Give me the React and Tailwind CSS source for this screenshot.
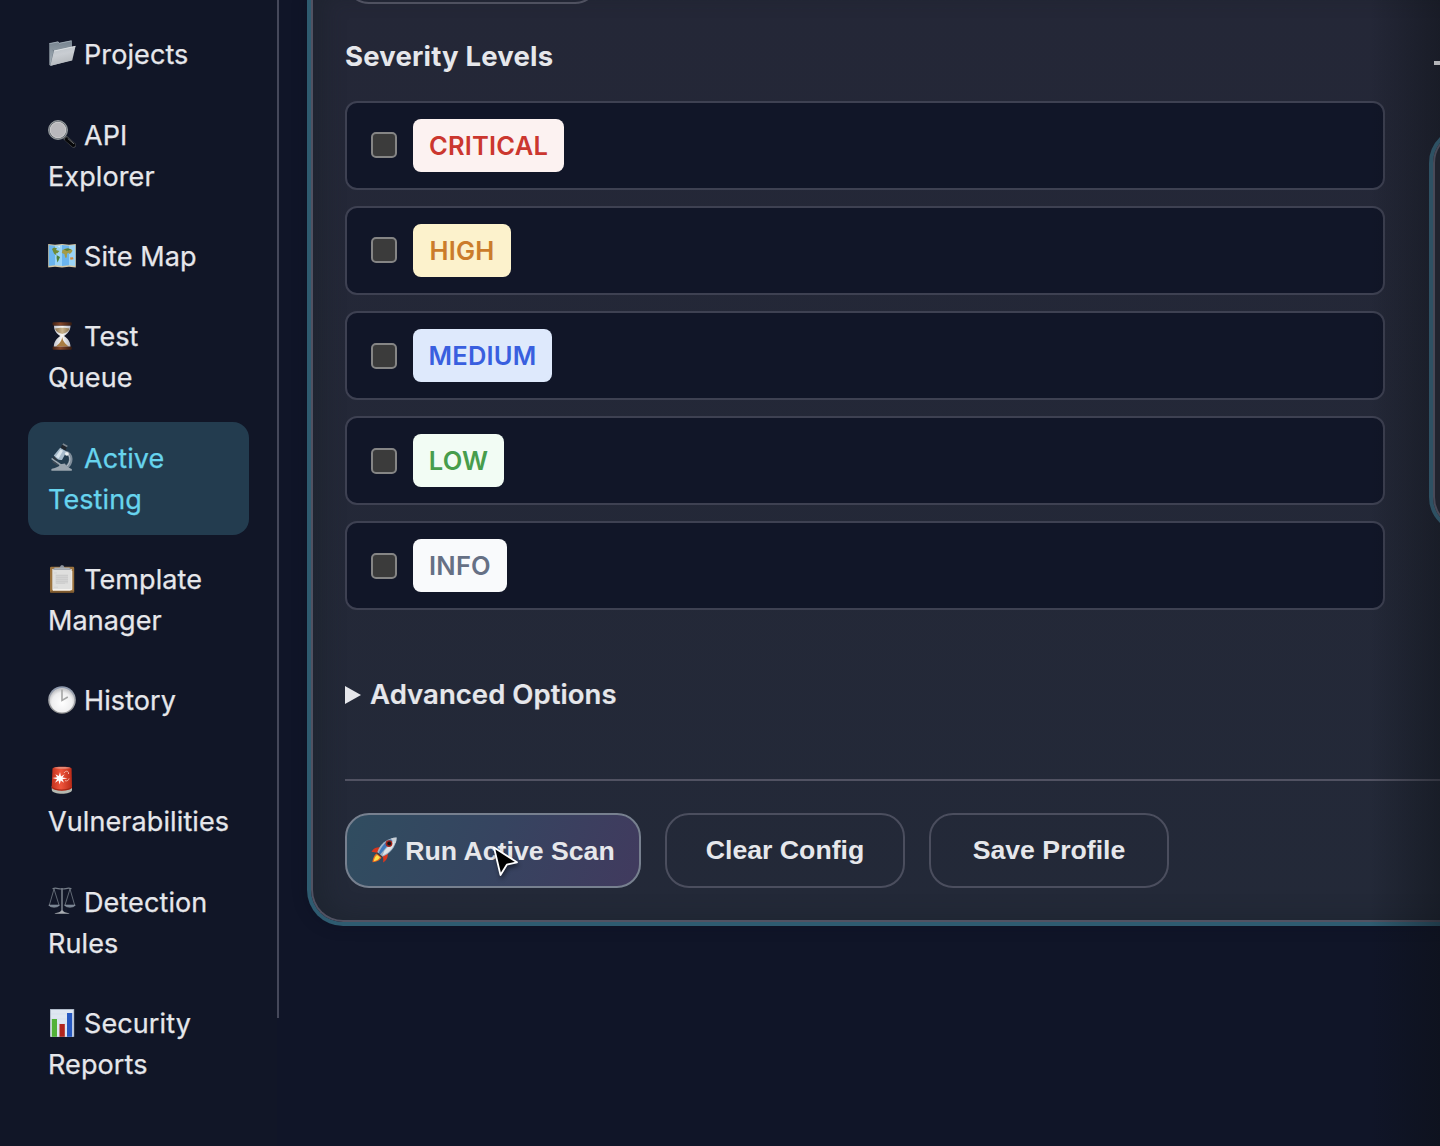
import React from "react";

const FolderIcon = () => (
  <>
    <defs>
      <linearGradient id="fo1" x1="0" y1="0" x2="0" y2="1"><stop offset="0" stopColor="#76838f" /><stop offset="1" stopColor="#a9b3bb" /></linearGradient>
      <linearGradient id="fo2" x1="0" y1="0" x2="0.3" y2="1"><stop offset="0" stopColor="#b9c1c8" /><stop offset="0.5" stopColor="#c9cdd2" /><stop offset="1" stopColor="#b4b8bc" /></linearGradient>
    </defs>
    <path d="M1.2 3.4 L10 1.6 L11.5 3 L23.3.6 L24 1.2 V20 L3 25.8 L1.4 25 Z" fill="url(#fo1)" />
    <path d="M1.3 3.6 L10 1.9 L11.4 3.2 L23.6.8" fill="none" stroke="#b3bfc8" strokeWidth=".7" />
    <path d="M4.6 10 L6 11 L2.6 25.2" fill="none" stroke="#66727d" strokeWidth=".8" />
    <path d="M6 10.8 L27.6 6 L24.2 20.4 L2.4 25.8 Z" fill="url(#fo2)" />
    <path d="M6 11 L27.4 6.3" stroke="#e3e7ea" strokeWidth=".8" />
  </>
);

const MagnifierIcon = () => (
  <>
    <path d="M16.5 17 L25.5 25.2" stroke="#4a4d52" strokeWidth="5" strokeLinecap="round" />
    <path d="M19 19.4 L25.4 25" stroke="#060709" strokeWidth="4" strokeLinecap="round" />
    <path d="M19.8 18.5 L26 23.9" stroke="#85888c" strokeWidth=".8" />
    <circle cx="10" cy="10" r="9" fill="#bdbdc0" stroke="#5e6368" strokeWidth="2" />
    <circle cx="10" cy="10" r="9.3" fill="none" stroke="#aab0b5" strokeWidth=".8" />
    <circle cx="10" cy="10" r="7.8" fill="#b9b8bc" stroke="#dadada" strokeWidth=".6" />
  </>
);

const MapIcon = () => (
  <>
    <path d="M.2 2 L7 2.7 L14 2 L21 2.7 L27.8 2 V25.5 L21 24.8 L14 25.5 L7 24.8 L.2 25.5 Z" fill="#d7c9a4" />
    <path d="M.8 3 L7 3.7 V23.2 L.8 24 Z M14 3 L21 3.7 V23.2 L14 24 Z" fill="#6bb5ed" />
    <path d="M7 3.7 L14 3 V24 L7 23.2 Z M21 3.7 L27.2 3 V24 L21 23.2 Z" fill="#9bd4f6" />
    <path d="M4 7 L6 5.6 L9 6.2 L8 8 L11.5 9 L9 11.5 L7.8 11 L8.5 13.5 L6 11.5Z" fill="#718c35" />
    <path d="M8.8 13.2 L12 15 L10.5 18.5 L9.4 20.5 L8.6 16Z" fill="#4d8138" />
    <path d="M14.5 8 L17.5 6.4 L23 7 L24.6 8.8 L23 11 L21.5 12 L20.5 10.8 L19 11.8 L18.8 15.5 L17.2 15.8 L16.4 12 L13.8 11Z" fill="#a59c48" />
    <path d="M15.8 7.4 L20 6.3 L23 7.5 L19 9Z" fill="#55803a" />
    <path d="M22 15.5 L25 15.2 L25.5 17.2 L22.5 17.7Z" fill="#d68a38" />
    <path d="M10 4.2 L12 3.8 L11.5 5.7Z" fill="#e6f3f5" />
  </>
);

const HourglassIcon = () => (
  <>
    <defs>
      <linearGradient id="hg" x1="0" x2="1"><stop offset="0" stopColor="#3f2013" /><stop offset=".4" stopColor="#85472a" /><stop offset="1" stopColor="#351b11" /></linearGradient>
      <linearGradient id="hg2" x1="0" x2="1"><stop offset="0" stopColor="#c4c6d0" /><stop offset=".5" stopColor="#faf8f3" /><stop offset="1" stopColor="#b8bbc8" /></linearGradient>
      <linearGradient id="hg3" x1="0" x2="1"><stop offset="0" stopColor="#8d7552" /><stop offset=".5" stopColor="#c9b48d" /><stop offset="1" stopColor="#8d7552" /></linearGradient>
    </defs>
    <path d="M6 3.5 H22.5 C22.5 9 19 12 16 14 C19 16 22.5 19 22.5 25 H5.8 C5.8 19 9.5 16 12.3 14 C9 12 6 9 6 3.5Z" fill="url(#hg2)" />
    <path d="M7 6.5 C11 5.4 18 5.4 21.6 6.5 C20.5 10 17.5 11 14.2 12 C11 11 8 10 7 6.5Z" fill="url(#hg3)" />
    <path d="M14.2 15 C15 21 19 22.5 20.5 24.5 H8 C9.5 22.5 13.4 21 14.2 15Z" fill="#a97d43" />
    <rect x="4.5" y=".3" width="19.3" height="3.2" rx="1" fill="url(#hg)" />
    <rect x="4.5" y="24.4" width="19.3" height="3.3" rx="1" fill="url(#hg)" />
  </>
);

const MicroscopeIcon = () => (
  <>
    <path d="M17 9.5 C24.5 10 24.8 21 17 25" fill="none" stroke="#7f8d9a" strokeWidth="3.6" />
    <path d="M20 11 C23.4 15 22 21 18 24" fill="none" stroke="#b9c5cf" strokeWidth="1" />
    <path d="M3.4 26 C7 24.5 11 24.5 12 21.2 L17 20.4 C18.5 24 22 25 23.8 26 V27.7 H3.4Z" fill="#9aa5af" />
    <path d="M3.8 14.8 L13.6 21.4 L12.6 23 L3.4 16.2Z" fill="#9aa5ae" />
    <path d="M4.6 18.6 L10 22" stroke="#424b55" strokeWidth="1.2" />
    <path d="M12.2 4.8 L18.6 8.4 L14 17 C11 17.6 7 15.6 5.8 12.6 Z" fill="#a7bbcb" />
    <path d="M12.6 6.4 L15 7.8 L10.6 15.4 L7.9 13.6Z" fill="#dae5ed" />
    <path d="M14.2 1.6 L18.8 4.2 L17.4 7.4 L12.8 4.8Z" fill="#20252c" />
    <path d="M15.2.3 L19.7 2.8 L19 4.3 L14.4 1.8Z" fill="#7b858e" />
    <path d="M6 12.9 L9.4 16.4 L8.2 17.8 L5.2 15.2Z" fill="#2f3841" />
    <circle cx="18.8" cy="10.8" r="1.9" fill="#edf1f3" />
  </>
);

const ClipboardIcon = () => (
  <>
    <rect x="2" y="1.8" width="24.2" height="26" rx="1.2" fill="#9c733e" />
    <path d="M2.5 27 H25.7" stroke="#6a4a26" strokeWidth="1.2" />
    <path d="M4.3 4 H23.8 V24.8 H4.3Z" fill="#dfdfde" />
    <path d="M22.5 25.3 H5 V24.6 H23.8 V6" fill="none" stroke="#fff" strokeWidth=".8" />
    <path d="M7.5 9.5 H20 V18.5 H7.5Z" fill="#d3d3d3" />
    <path d="M8 10.5 H20 M8 12.5 H20 M8 14.5 H20 M8 16.5 H20 M8 18.3 H17" stroke="#cacaca" strokeWidth=".8" />
    <path d="M6 8 H9 M6 22.3 H10" stroke="#d0d0d0" strokeWidth=".7" />
    <path d="M6 2.7 H11.5 L13 .2 H15.2 L16.7 2.7 H22 L22.8 4.8 H5.2Z" fill="#8d949e" />
    <path d="M6.6 3.2 H21.5" stroke="#c2c7cd" strokeWidth=".8" />
  </>
);

const ClockIcon = () => (
  <>
    <defs>
      <radialGradient id="ck" cx=".5" cy=".6" r=".55"><stop offset="0" stopColor="#ffffff" /><stop offset=".75" stopColor="#efeff0" /><stop offset="1" stopColor="#c9c9cb" /></radialGradient>
      <linearGradient id="ck2" x1="0" y1="0" x2="0" y2="1"><stop offset="0" stopColor="#8b97ad" /><stop offset=".5" stopColor="#a7a9ad" /><stop offset="1" stopColor="#8f8f8f" /></linearGradient>
    </defs>
    <circle cx="14" cy="14" r="13.8" fill="url(#ck2)" />
    <circle cx="14" cy="14.3" r="12.2" fill="url(#ck)" />
    <path d="M14 3.5 V14.4 L19.8 11" fill="none" stroke="#a5a6a6" strokeWidth="1.6" />
  </>
);

const SirenIcon = () => (
  <>
    <defs>
      <linearGradient id="si" x1="0" x2="1"><stop offset="0" stopColor="#c2321e" /><stop offset=".45" stopColor="#f0563c" /><stop offset="1" stopColor="#b92a17" /></linearGradient>
    </defs>
    <path d="M3.8 20 H24 V24 C23.5 29 4.3 29 3.8 24Z" fill="#b4b8b0" />
    <path d="M4.5 2.5 C5 .1 23 .1 23.6 2.5 L24 21 C23.5 25.5 4.4 25.5 3.7 21Z" fill="url(#si)" />
    <path d="M5.8 2 C9 .8 20 .8 22.6 2 C20 3 9 3 5.8 2Z" fill="#e58b78" />
    <path d="M3.8 20.6 C7 24.4 20 24.4 24 20.6 V22 C20 25.5 7 25.5 3.8 22Z" fill="#a92817" />
    <path d="M16 7 C18 4 21 5 20.5 8 M17 14.7 C19 15.5 21 14 21 12.5" fill="none" stroke="#f0b5a8" strokeWidth="1" />
    <path d="M12 6 L13 10.4 L16.6 8.2 L14.5 11.4 L19.5 12.2 L14.5 13.3 L16 16.8 L12.8 14.6 L11.6 18.5 L10.6 14.6 L7 16.8 L9 13.2 L4.4 12 L9 11.2 L7.4 8.2 L10.8 10Z" fill="#fff" />
  </>
);

const ScalesIcon = () => (
  <g fill="none" stroke="#747c87">
    <path d="M14 1 V25" strokeWidth="1.5" stroke="#7b838e" />
    <path d="M4.5 1.7 C9 .2 10 2.3 14 2 C18 2.3 19 .2 23.5 1.7" strokeWidth="1.2" />
    <path d="M6 2 L1.4 18 M6 2 L11 18 M22 2 L17 18 M22 2 L26.6 18" strokeWidth=".8" />
    <path d="M.7 18 H11.5 C10 21 2.3 21 .7 18Z M16.5 18 H27.3 C26 21 18 21 16.5 18Z" fill="#737f8e" stroke="#9aa3ad" strokeWidth=".5" />
    <path d="M6.5 26.7 C8 25 12.5 25.8 13 23.4 H15 C15.5 25.8 20 25 21.6 26.7Z" fill="#a9adb2" stroke="none" />
  </g>
);

const ChartIcon = () => (
  <>
    <rect x="2" y="0" width="24.2" height="27.8" fill="#a4afbf" />
    <rect x="2.8" y=".8" width="22.6" height="27" fill="#dfe7f2" />
    <path d="M3 5 H25 M3 10 H25 M3 15 H25 M3 20 H25" stroke="#d5dde9" strokeWidth=".6" />
    <rect x="3.8" y="10" width="5.2" height="17.8" fill="#52b238" />
    <rect x="11.5" y="15" width="5.3" height="12.8" fill="#b2261d" />
    <rect x="19" y="4" width="5.2" height="23.8" fill="#2759c1" />
  </>
);

const RocketIcon = () => (
  <svg className="mb-[2px] mr-2 size-[26px] shrink-0" viewBox="0 0 26 26">
    <path d="M1 14 C3 10.5 7 10 10.5 10.5 L7.5 16 L.5 14.8Z" fill="#d9361d" />
    <path d="M11.5 19 L16.5 16 C17.5 20 15.5 23.5 12 25.5 C12.6 23 12.3 21 11.5 19Z" fill="#d9361d" />
    <path d="M5.5 16.5 L10.5 20 C9.5 23.2 5.5 24.8 1.4 25.2 C1.8 21.8 3 18 5.5 16.5Z" fill="#ee6b1d" />
    <path d="M6.2 18 L9 20.2 C8 22.5 5 24 2.8 24.2 C3.2 21.5 4.2 19 6.2 18Z" fill="#fbe14c" />
    <path d="M6 16 C8.5 8 14.5 1.5 25.6.6 C25 11 18.5 17.3 10.6 20Z" fill="#9fb3c6" />
    <path d="M7.5 16.8 C10 10 15 3.5 22 1.8 C19 6 13 13 8.7 18Z" fill="#3f78b9" />
    <path d="M13.5 13.5 L24.5 1.8 C23.8 10 19 15.5 11.5 18.6Z" fill="#dfe3e6" />
    <path d="M19.5 1.7 C21.5 1 23.5.7 25.6.6 C25.6 2.6 25.3 4.5 24.7 6.2Z" fill="#c9d0d7" />
    <circle cx="18" cy="6.6" r="3.4" fill="#a32219" />
    <circle cx="18.2" cy="6.5" r="1.9" fill="#10151b" />
    <path d="M6 15.8 L11 20" stroke="#4a3530" strokeWidth="1.3" />
  </svg>
);

const nav = [
  { icon: FolderIcon, first: "Projects" },
  { icon: MagnifierIcon, first: "API", second: "Explorer" },
  { icon: MapIcon, first: "Site Map" },
  { icon: HourglassIcon, first: "Test", second: "Queue" },
  { icon: MicroscopeIcon, first: "Active", second: "Testing", active: true },
  { icon: ClipboardIcon, first: "Template", second: "Manager" },
  { icon: ClockIcon, first: "History" },
  { icon: SirenIcon, first: "", second: "Vulnerabilities" },
  { icon: ScalesIcon, first: "Detection", second: "Rules" },
  { icon: ChartIcon, first: "Security", second: "Reports" },
];

function NavItem({ icon: Icon, first, second, active }) {
  return (
    <a
      className={
        "block shrink-0 rounded-2xl px-5 pt-[17px] text-[27px] leading-[40.6px] tracking-[0.1px] [-webkit-text-stroke:0.25px] " +
        (second ? "pb-[14.6px] " : "pb-[15px] ") +
        (active ? "bg-[#233c4f] text-[#67d4ee]" : "text-[#e6e7eb]")
      }
    >
      <span className="flex h-[40.6px] items-center gap-2">
        <svg className="mb-[3px] size-7 shrink-0" viewBox="0 0 28 28"><Icon /></svg>
        <span className="whitespace-nowrap">{first}</span>
      </span>
      {second && <span className="block whitespace-nowrap pt-[0.4px]">{second}</span>}
    </a>
  );
}

const levels = [
  { name: "CRITICAL", c: "w-[151px] bg-[#fcf2f1] text-[#cb372f]" },
  { name: "HIGH", c: "w-[98px] bg-[#fcf2cc] text-[#cb7c2b]" },
  { name: "MEDIUM", c: "w-[139px] bg-[#dee9fc] text-[#395fdf]" },
  { name: "LOW", c: "w-[91px] bg-[#f2fcf4] text-[#479d4c]" },
  { name: "INFO", c: "w-[94px] bg-[#f9fafc] text-[#667085]" },
];

const button =
  "flex h-[75px] items-center justify-center rounded-3xl border-2 font-['Liberation_Sans',Arial,sans-serif] text-[26.67px] font-bold ";

export default function App() {
  return (
    <div className="relative flex h-[1146px] w-[1440px] overflow-hidden bg-[#101528] font-['Inter',sans-serif] text-[#e6e7eb]">
      <div className="w-[277px] shrink-0 bg-[#111627]">
        <aside className="flex h-[1018px] w-[279px] flex-col gap-2 border-r-2 border-[#45485a] px-7 pt-[18px]">
          {nav.map((n) => (
            <NavItem key={n.first + n.second} {...n} />
          ))}
        </aside>
      </div>

      <main className="min-w-0 flex-1 overflow-hidden pl-[34px]">
        <section className="h-[922px] w-[1300px] rounded-bl-[32px] border-b-2 border-l-2 border-[#515262] bg-linear-to-b from-[#242737] to-[#232938] pl-8 shadow-[inset_12px_-4px_20px_rgba(24,31,38,0.35),0_0_0_4px_#2e5b70,0_0_16px_2px_rgba(8,12,28,0.35)]">
          <div className="h-1 w-[254px] overflow-hidden">
            <div className="-mt-[70px] h-[74px] w-full rounded-3xl border-2 border-[#4f5160]" />
          </div>
          <h3 className="mt-8 text-[27.5px] font-bold leading-[41px] tracking-[0.18px]">Severity Levels</h3>

          <div className="mt-6 flex w-[1040px] flex-col gap-4">
            {levels.map((l) => (
              <label key={l.name} className="flex h-[89px] items-center gap-4 rounded-xl border-2 border-[#3e4152] bg-[#111628] pl-6 [&:not(:last-child)]:mb-[0.1px]">
                <span className="mb-[0.25px] size-[26px] rounded-[5px] border-2 border-[#858585] bg-[#3b3b3b]" />
                <span className={"flex h-[53px] items-center justify-center rounded-lg pt-px text-[25.5px] font-semibold tracking-[0.2px] " + l.c}>
                  {l.name}
                </span>
              </label>
            ))}
          </div>

          <div className="mt-[64px] flex h-[41px] items-center gap-[9px]">
            <svg className="h-[18px] w-4" viewBox="0 0 16 18"><path d="M0 0 L16 9 L0 18Z" fill="#e6e7eb" /></svg>
            <span className="text-[27.5px] font-semibold tracking-[0.05px] [-webkit-text-stroke:0.2px]">Advanced Options</span>
          </div>

          <div className="mt-[64px] flex gap-6 border-t-2 border-[#515262] pt-8">
            <button className={button + "w-[296px] border-[#77808f] bg-linear-[110deg] from-[#304d60] via-[#364460] to-[#413a5e] bg-origin-border"}>
              <RocketIcon />
              Run Active Scan
            </button>
            <button className={button + "w-60 border-[#4b4e5e] pb-[2px]"}>Clear Config</button>
            <button className={button + "w-60 border-[#4b4e5e] pb-[2px]"}>Save Profile</button>
          </div>
        </section>
      </main>

      {/* Shade cast by the drawer that starts past the right edge */}
      <div className="pointer-events-none absolute right-0 top-0 h-full w-[70px] bg-linear-to-r from-[#0a0d12]/0 to-[#0c0f14]/45" />
      <div className="absolute right-0 top-[61px] h-1 w-[6px] bg-[#b3b4b8]" />
      <div className="absolute right-0 top-[127px] h-[406px] w-[11px] overflow-hidden">
        <div className="h-full w-[200px] rounded-[36px] border-4 border-[#2e5163]">
          <div className="h-full w-full rounded-[32px] border-2 border-[#494a58] bg-[#20232e]" />
        </div>
      </div>

      <svg className="absolute left-[490px] top-[843px] h-[38px] w-[32px] drop-shadow-[1px_3px_2px_rgba(0,0,0,0.45)]" viewBox="0 0 32 38">
        <path d="M4 4.5 L27 19.3 L16.8 21.7 L10.5 32 Z" fill="#000" stroke="#fff" strokeWidth="1.8" strokeLinejoin="round" />
      </svg>
    </div>
  );
}
